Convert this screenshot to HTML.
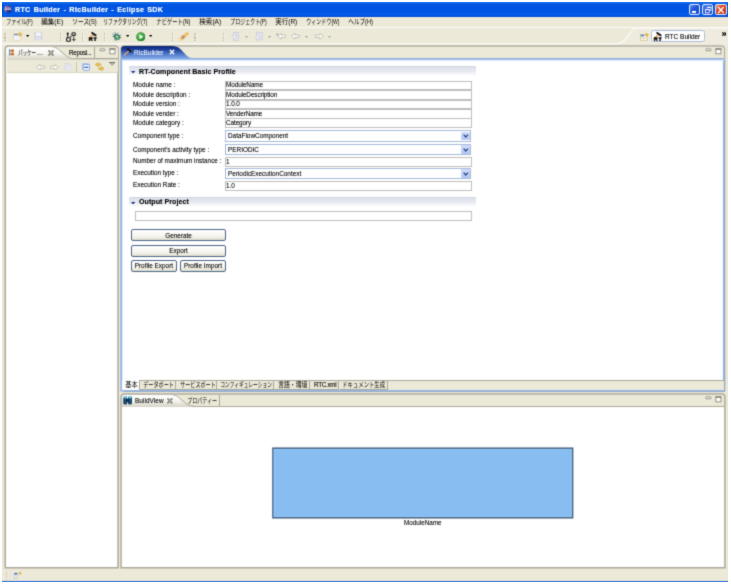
<!DOCTYPE html><html><head><meta charset="utf-8"><title>RTC Builder - RtcBuilder - Eclipse SDK</title><style>
*{box-sizing:border-box;margin:0;padding:0}
html,body{width:731px;height:586px;overflow:hidden;background:#fff}
body{position:relative;font-family:"Liberation Sans",sans-serif;font-size:6.4px;color:#000;line-height:1}
.a,.jp,.t{position:absolute}
.jp{overflow:visible}
.jp text{font-family:"Liberation Sans","Noto Sans CJK JP",sans-serif}
.t{white-space:nowrap;line-height:8px;height:8px;will-change:transform;text-shadow:0 0 .5px rgba(0,0,0,.32)}
.b{font-weight:bold}
#win{filter:url(#soft);left:2px;top:2px;width:726px;height:580px;background:#ece9d8}
#title{left:0;top:0;width:726px;height:14.6px;background:linear-gradient(#3a8af5 0%,#0a60e8 9%,#0054e0 22%,#0055e3 68%,#0560ee 86%,#0040c8 100%)}
.grip{width:1.4px;height:8.5px;background:repeating-linear-gradient(#bdb9a8 0,#bdb9a8 1.1px,transparent 1.1px,transparent 2.2px);box-shadow:.7px .7px 0 rgba(255,255,255,.6)}
.inp{background:#fff;border:1.15px solid #bdbdbd}
.cmb{height:11.2px;background:#fff;border:1px solid #a5b9d8}
.cmb i{position:absolute;right:0.3px;top:0.3px;bottom:0.3px;width:8.6px;background:linear-gradient(#d0dcfa,#b4c8f6);border-radius:1px}
.btn{height:12px;border:1px solid #4a6389;border-radius:2px;background:linear-gradient(#fff 0%,#f6f5ee 60%,#e2dfd0 100%);text-align:center}
.sec{height:10px;border-radius:2px 2px 0 0;background:linear-gradient(#dadee8 0%,#e6e9f0 50%,#fff 100%);box-shadow:inset 0 .8px 0 #cfd4df}
.tab{top:0;height:9.8px;background:#ece9d8;border:1px solid #aca899;border-left:none}
</style></head><body>
<svg width="0" height="0" style="position:absolute"><filter id="soft" x="0" y="0" width="1" height="1" color-interpolation-filters="sRGB"><feConvolveMatrix order="3" kernelMatrix="1 4 1 4 20 4 1 4 1" divisor="40" edgeMode="duplicate" preserveAlpha="true"/></filter></svg>
<div id="win" class="a">
<div id="title" class="a"></div>
<svg class="a" style="left:1.5px;top:2.9px" width="8" height="8" viewBox="0 0 8 8"><defs><radialGradient id="eg" cx=".5" cy=".3" r=".8"><stop offset="0" stop-color="#6a62b0"/><stop offset=".6" stop-color="#34307e"/><stop offset="1" stop-color="#1f1b5a"/></radialGradient></defs><circle cx="4" cy="4" r="3.7" fill="url(#eg)"/><path d="M3.2 .4A3.7 3.7 0 0 0 3.2 7.6A5 5 0 0 1 3.2 .4" fill="#d8b4c0" opacity=".85"/><rect x="1.2" y="2.7" width="6" height=".75" fill="#e4def2" opacity=".95"/><rect x="1" y="4.1" width="6.4" height=".75" fill="#e4def2" opacity=".9"/></svg>
<div class="t b" style="left:12.7px;top:3.9px;font-size:7.2px;color:#fff;letter-spacing:.26px;word-spacing:.9px;text-shadow:0 0 .5px rgba(255,255,255,.6)">RTC Builder - RtcBuilder - Eclipse SDK</div>
<div class="a" style="left:687px;top:1.5px;width:11.4px;height:11.2px;border-radius:2px;border:.8px solid #e9effb;background:linear-gradient(135deg,#5b90f2,#2259da 40%,#1746c2)"><div class="a" style="left:2.2px;top:6.3px;width:4.3px;height:1.9px;background:#fff"></div></div>
<div class="a" style="left:700.1px;top:1.5px;width:11.4px;height:11.2px;border-radius:2px;border:.8px solid #e9effb;background:linear-gradient(135deg,#5b90f2,#2259da 40%,#1746c2)"><svg class="a" style="left:0;top:0" width="10" height="10" viewBox="0 0 10 10"><g fill="none" stroke="#fff" stroke-width=".8"><path d="M4.2 3.4V2.2H8v3.3H6.6" /><path d="M3.9 2.4H8.3" stroke-width="1.1"/><rect x="2.3" y="4.4" width="3.9" height="3.4"/><path d="M2 4.6H6.5" stroke-width="1.1"/></g></svg></div>
<div class="a" style="left:713.2px;top:1.5px;width:11.4px;height:11.2px;border-radius:2px;border:.8px solid #e9effb;background:linear-gradient(135deg,#ee9276,#d8441e 40%,#bc310f)"><svg class="a" style="left:0;top:0" width="10" height="10" viewBox="0 0 10 10"><path d="M2.1 2L7.7 8M7.7 2L2.1 8" stroke="#fff" stroke-width="1.35"/></svg></div>
<svg class="jp " role="img" aria-label="ファイル(F)" style="left:4.30px;top:15.85px" width="27.10" height="7.81" viewBox="0 0 27.10 7.81"><text x="0.3" y="6.25" font-size="7.1" fill="#000" textLength="26.5" lengthAdjust="spacingAndGlyphs">ファイル(F)</text></svg>
<svg class="jp " role="img" aria-label="編集(E)" style="left:39.40px;top:15.85px" width="22.40" height="7.81" viewBox="0 0 22.40 7.81"><text x="0.3" y="6.25" font-size="7.1" fill="#000" textLength="21.8" lengthAdjust="spacingAndGlyphs">編集(E)</text></svg>
<svg class="jp " role="img" aria-label="ソース(S)" style="left:69.80px;top:15.85px" width="25.00" height="7.81" viewBox="0 0 25.00 7.81"><text x="0.3" y="6.25" font-size="7.1" fill="#000" textLength="24.4" lengthAdjust="spacingAndGlyphs">ソース(S)</text></svg>
<svg class="jp " role="img" aria-label="リファクタリング(T)" style="left:101.30px;top:15.85px" width="44.80" height="7.81" viewBox="0 0 44.80 7.81"><text x="0.3" y="6.25" font-size="7.1" fill="#000" textLength="44.2" lengthAdjust="spacingAndGlyphs">リファクタリング(T)</text></svg>
<svg class="jp " role="img" aria-label="ナビゲート(N)" style="left:154.40px;top:15.85px" width="34.60" height="7.81" viewBox="0 0 34.60 7.81"><text x="0.3" y="6.25" font-size="7.1" fill="#000" textLength="34" lengthAdjust="spacingAndGlyphs">ナビゲート(N)</text></svg>
<svg class="jp " role="img" aria-label="検索(A)" style="left:197.20px;top:15.85px" width="22.50" height="7.81" viewBox="0 0 22.50 7.81"><text x="0.3" y="6.25" font-size="7.1" fill="#000" textLength="21.9" lengthAdjust="spacingAndGlyphs">検索(A)</text></svg>
<svg class="jp " role="img" aria-label="プロジェクト(P)" style="left:228.00px;top:15.85px" width="37.10" height="7.81" viewBox="0 0 37.10 7.81"><text x="0.3" y="6.25" font-size="7.1" fill="#000" textLength="36.5" lengthAdjust="spacingAndGlyphs">プロジェクト(P)</text></svg>
<svg class="jp " role="img" aria-label="実行(R)" style="left:273.10px;top:15.85px" width="22.60" height="7.81" viewBox="0 0 22.60 7.81"><text x="0.3" y="6.25" font-size="7.1" fill="#000" textLength="22" lengthAdjust="spacingAndGlyphs">実行(R)</text></svg>
<svg class="jp " role="img" aria-label="ウィンドウ(W)" style="left:303.90px;top:15.85px" width="33.80" height="7.81" viewBox="0 0 33.80 7.81"><text x="0.3" y="6.25" font-size="7.1" fill="#000" textLength="33.2" lengthAdjust="spacingAndGlyphs">ウィンドウ(W)</text></svg>
<svg class="jp " role="img" aria-label="ヘルプ(H)" style="left:345.90px;top:15.85px" width="25.10" height="7.81" viewBox="0 0 25.10 7.81"><text x="0.3" y="6.25" font-size="7.1" fill="#000" textLength="24.5" lengthAdjust="spacingAndGlyphs">ヘルプ(H)</text></svg>
<div class="a" style="left:0;top:25px;width:726px;height:1.1px;background:#fbfaf5"></div>
<div class="a grip" style="left:2.2px;top:30.6px"></div>
<div class="a grip" style="left:57.6px;top:30.6px"></div>
<div class="a grip" style="left:79.8px;top:30.6px"></div>
<div class="a grip" style="left:102px;top:30.6px"></div>
<div class="a grip" style="left:170px;top:30.6px"></div>
<div class="a grip" style="left:192.4px;top:30.6px"></div>
<div class="a grip" style="left:220.8px;top:30.6px"></div>
<svg class="a" style="left:10.80px;top:30.40px" width="9.4" height="8.8" viewBox="0 0 9.4 8.8"><rect x=".5" y="1.5" width="7.4" height="6.7" rx=".7" fill="#fff" stroke="#e6d19a" stroke-width=".8"/><rect x="1" y="2" width="4.2" height="1.3" fill="#4f8ce0"/><rect x="1.3" y="3.9" width="5.6" height="3.5" fill="#eef4fd"/><path d="M7 .1l.8 1.3 1.4.3-1 1.1.2 1.5-1.4-.6-1.3.6.1-1.5-1-1.1 1.5-.3z" fill="#e6b948" stroke="#cfa038" stroke-width=".3"/></svg>
<svg class="a" style="left:24.10px;top:33.30px" width="3.4" height="1.9" viewBox="0 0 3.4 1.9"><path d="M0 0H3.4L1.7 1.9Z" fill="#000"/></svg>
<svg class="a" style="left:32.10px;top:30.40px" width="8.8" height="8.6" viewBox="0 0 8.8 8.6"><rect x=".3" y=".3" width="8.2" height="8" rx=".6" fill="#d4d5df"/><rect x="2" y=".6" width="4.8" height="3.4" fill="#f4f4f8"/><rect x="2.2" y="5.4" width="4.4" height="2.9" fill="#e9e9f0"/><rect x="3.9" y="5" width="1" height="3.3" fill="#d0d1db"/></svg>
<svg class="a" style="left:63.60px;top:29.60px" width="10.6" height="10" viewBox="0 0 10.6 10"><g fill="none" stroke="#0a0a0a" stroke-width="1.15"><path d="M1.8 2v3.6" stroke-width="1"/><rect x=".7" y="5.8" width="3.6" height="3.5" rx=".9" fill="#fff"/><rect x="5.9" y=".7" width="3.5" height="2.7" rx="1.2" fill="#fff"/><path d="M7.8 3.6v1.6" stroke-width=".8" stroke-dasharray=".7 .4"/></g><circle cx="1.7" cy="1.5" r="1.05" fill="#0a0a0a"/><circle cx="4.9" cy="4.5" r=".7" fill="#0a0a0a"/><circle cx="7.8" cy="6" r=".7" fill="#0a0a0a"/><path d="M5.9 6.9H9.8L7.85 9.6z" fill="#4a4a4a"/></svg>
<svg class="a" style="left:86.00px;top:30.00px" width="9.4" height="9.4" viewBox="0 0 9.4 9.4"><path d="M5 3.1L.9 6.7" stroke="#f2a25a" stroke-width="1.6" stroke-linecap="round"/><path d="M4.3 1L7.5 3.3" stroke="#0a0a0a" stroke-width="2" stroke-linecap="round"/><path d="M.9 5.2h2.5q1.4 0 1.4 1.1 0 .8-.8 1.1l1 1.5H3.6L2.9 7.6H2.2V8.9H.9zM5.5 5.2h3.3v1.2H7.8v2.5H6.4V6.4H5.5z" fill="#0a0a0a"/></svg>
<svg class="a" style="left:110.40px;top:30.00px" width="9.8" height="9.4" viewBox="0 0 9.8 9.4"><g stroke="#2a5f74" stroke-width=".8" stroke-linecap="round"><path d="M4.9 4.9L.9 2.2M4.9 4.9L3 .6M4.9 4.9L6 1.1M4.9 4.9L8.4 3.2M4.9 4.9L8.9 5.5M4.9 4.9L.9 4.4M4.9 4.9L2.1 7.5M4.9 4.9L3.9 8.8M4.9 4.9L7.8 7.4"/></g><ellipse cx="5" cy="5" rx="2.9" ry="2.5" fill="#1f6068" transform="rotate(25 5 5)"/><ellipse cx="5.1" cy="5" rx="2" ry="1.6" fill="#6fc45a" transform="rotate(25 5 5)"/><ellipse cx="4.6" cy="4.6" rx=".9" ry=".7" fill="#c8efb0" transform="rotate(25 5 5)"/></svg>
<svg class="a" style="left:123.90px;top:32.90px" width="3.4" height="1.9" viewBox="0 0 3.4 1.9"><path d="M0 0H3.4L1.7 1.9Z" fill="#000"/></svg>
<svg class="a" style="left:133.60px;top:29.60px" width="9.6" height="9.6" viewBox="0 0 9.6 9.6"><defs><radialGradient id="rg" cx=".4" cy=".35" r=".75"><stop offset="0" stop-color="#6fc86a"/><stop offset=".7" stop-color="#2f962f"/><stop offset="1" stop-color="#1f7a24"/></radialGradient></defs><circle cx="4.8" cy="4.8" r="4.4" fill="url(#rg)" stroke="#2a8430" stroke-width=".5"/><path d="M3.5 2.4L7.3 4.8 3.5 7.2z" fill="#fff"/></svg>
<svg class="a" style="left:147.00px;top:32.90px" width="3.4" height="1.9" viewBox="0 0 3.4 1.9"><path d="M0 0H3.4L1.7 1.9Z" fill="#000"/></svg>
<svg class="a" style="left:175.60px;top:29.60px" width="11" height="9.6" viewBox="0 0 11 9.6"><defs><radialGradient id="fl"><stop offset="0" stop-color="#fff"/><stop offset="1" stop-color="#fff" stop-opacity="0"/></radialGradient></defs><path d="M2.2 7.6L9 1.9" stroke="#f0aa3a" stroke-width="3.1" stroke-linecap="round"/><path d="M4.4 5.7L5.9 4.5" stroke="#9a96b4" stroke-width="3.1"/><path d="M7.3 3.2L8.8 2" stroke="#f6d890" stroke-width="2.2"/><circle cx="2" cy="7.8" r="2" fill="url(#fl)"/></svg>
<svg class="a" style="left:229.00px;top:30.00px" width="8.2" height="8.9" viewBox="0 0 8.2 8.9"><rect x="2.4" y=".5" width="5.4" height="8" fill="#e2e2ec" stroke="#c6c7d6" stroke-width=".6"/><path d="M2.4 .6v3.5H.8l2.3 2.8 2.3-2.8H3.9V.6z" fill="#fafafc" stroke="#c0c0cc" stroke-width=".55"/></svg>
<svg class="a" style="left:243.10px;top:33.60px" width="3" height="2" viewBox="0 0 3 2"><path d="M0 0H3L1.5 2Z" fill="#aaa799"/></svg>
<svg class="a" style="left:252.40px;top:30.00px" width="8.6" height="9.2" viewBox="0 0 8.6 9.2"><rect x="2.6" y=".5" width="5.6" height="7.4" fill="#e2e2ec" stroke="#c6c7d6" stroke-width=".6"/><path d="M2.6 8.9V5.7H1l2.4-2.8 2.4 2.8H4.2V8.9z" fill="#fafafc" stroke="#c0c0cc" stroke-width=".55"/></svg>
<svg class="a" style="left:266.00px;top:33.60px" width="3" height="2" viewBox="0 0 3 2"><path d="M0 0H3L1.5 2Z" fill="#aaa799"/></svg>
<svg class="a" style="left:273.60px;top:31.00px" width="10" height="6.6" viewBox="0 0 10 6.6"><g transform="translate(1.2,0)"><path d="M.5 3.3L4 .4v1.7h4.4v2.4H4v1.7z" fill="#fdfdfb" stroke="#b9b6a8" stroke-width=".8"/></g><circle cx="1.3" cy="1.4" r=".9" fill="#8a98b8"/></svg>
<svg class="a" style="left:289.40px;top:31.00px" width="9" height="6.6" viewBox="0 0 9 6.6"><path d="M.5 3.3L4 .4v1.7h4.4v2.4H4v1.7z" fill="#fdfdfb" stroke="#b9b6a8" stroke-width=".8"/></svg>
<svg class="a" style="left:302.90px;top:33.60px" width="3" height="2" viewBox="0 0 3 2"><path d="M0 0H3L1.5 2Z" fill="#aaa799"/></svg>
<svg class="a" style="left:312.80px;top:31.00px" width="9" height="6.6" viewBox="0 0 9 6.6"><g transform="translate(8.9,0) scale(-1,1)"><path d="M.5 3.3L4 .4v1.7h4.4v2.4H4v1.7z" fill="#fdfdfb" stroke="#b9b6a8" stroke-width=".8"/></g></svg>
<svg class="a" style="left:326.30px;top:33.60px" width="3" height="2" viewBox="0 0 3 2"><path d="M0 0H3L1.5 2Z" fill="#aaa799"/></svg>
<svg class="a" style="left:0.00px;top:24.00px" width="726" height="19" viewBox="0 0 726 19"><path d="M612 18.4C621.5 18.4 623.5 14 626.5 9.5C629.5 5 630.5 2.2 637 2.2H726V18.4z" fill="#efecdf"/><path d="M0 17.9H612C621.5 17.9 623.5 13.5 626.5 9C629.5 4.5 630.5 1.9 637 1.9H726" fill="none" stroke="#fcfbf7" stroke-width="1.1"/></svg>
<svg class="a" style="left:638.40px;top:30.80px" width="8.6" height="8.4" viewBox="0 0 8.6 8.4"><rect x=".5" y="1.4" width="6.6" height="6.4" fill="#fffef6" stroke="#c9b778" stroke-width=".7"/><rect x=".9" y="1.8" width="3.4" height="1.6" fill="#3f7fdc"/><path d="M.9 5.2H6.8M3.6 3.4V7.4" stroke="#cfc08a" stroke-width=".6"/><path d="M6.8 0l.6 1.1 1.2.2-.9.9.2 1.2-1.1-.5-1.1.5.2-1.2-.9-.9 1.2-.2z" fill="#e8b838" stroke="#c8962a" stroke-width=".3"/></svg>
<div class="a" style="left:648.8px;top:28.4px;width:53.8px;height:12px;background:#fff;border:1px solid #a9bcd6;border-radius:2.5px"></div>
<svg class="a" style="left:651.00px;top:30.20px" width="9.4" height="9.4" viewBox="0 0 9.4 9.4"><path d="M5 3.1L.9 6.7" stroke="#f2a25a" stroke-width="1.6" stroke-linecap="round"/><path d="M4.3 1L7.5 3.3" stroke="#0a0a0a" stroke-width="2" stroke-linecap="round"/><path d="M.9 5.2h2.5q1.4 0 1.4 1.1 0 .8-.8 1.1l1 1.5H3.6L2.9 7.6H2.2V8.9H.9zM5.5 5.2h3.3v1.2H7.8v2.5H6.4V6.4H5.5z" fill="#0a0a0a"/></svg>
<div class="t" style="left:662.7px;top:30.7px;font-size:6.5px">RTC Builder</div>
<svg class="a" style="left:719.70px;top:30.00px" width="4.8" height="4" viewBox="0 0 4.8 4"><path d="M.3 .3L1.9 2 .3 3.7M2.5 .3L4.1 2 2.5 3.7" fill="none" stroke="#000" stroke-width="1.15"/></svg>
<svg class="a" style="left:0;top:0;pointer-events:none" width="726" height="580" viewBox="2 2 726 580"><path d="M5.25 567.75V49.3Q5.25 45.9 8.65 45.9H114.64999999999999Q118.05 45.9 118.05 49.3V567.75z" fill="#fff" stroke="#aca899" stroke-width="1.5"/></svg>
<div class="a" style="left:4.50px;top:44.70px;width:111.00px;height:12.40px;background:#ece9d8;border-radius:2.5px 2.5px 0 0"></div>
<div class="a" style="left:4.50px;top:57.10px;width:111.00px;height:14.00px;background:#ece9d8;border-bottom:1px solid #d9d6c6"></div>
<svg class="a" style="left:4.50px;top:44.70px" width="70" height="13.2" viewBox="0 0 70 13.2"><defs><linearGradient id="vt" x1="0" y1="0" x2="0" y2="1"><stop offset="0" stop-color="#fff"/><stop offset=".45" stop-color="#f7f6f1"/><stop offset="1" stop-color="#d5d2c5"/></linearGradient></defs><path d="M0 13.2V2.5Q0 0 2.5 0H43C49 0 51 2.6 53.2 4.3L59.8 9.7C62 11.4 64 12.1 68 12.1H70V13.2H0z" fill="url(#vt)"/><path d="M43 -.5C49 -.5 51 2.1 53.2 3.8L59.8 9.2C62 10.9 64 11.8 68 11.8H70" fill="none" stroke="#aca899" stroke-width="1"/></svg>
<div class="a" style="left:73.00px;top:56.00px;width:43.00px;height:1.00px;background:#aca899"></div>
<div class="a" style="left:70.00px;top:57.00px;width:46.00px;height:1.00px;background:#d6d3c4"></div>
<div class="a" style="left:92.00px;top:44.50px;width:1.00px;height:12.40px;background:#aca899"></div>
<svg class="a" style="left:7.00px;top:46.80px" width="5.4" height="6.8" viewBox="0 0 5.4 6.8"><path d="M.5 0V6.8" stroke="#5a88c8" stroke-width=".9"/><rect x="1.6" y=".4" width="3.4" height="2.5" rx=".5" fill="#c8701c"/><rect x="1.6" y="3.7" width="3.4" height="2.5" rx=".5" fill="#c8701c"/><path d="M.5 1.6H2M.5 5H2" stroke="#5a88c8" stroke-width=".6"/></svg>
<svg class="jp " role="img" aria-label="パッケー" style="left:16.00px;top:46.95px" width="18.40" height="7.81" viewBox="0 0 18.40 7.81"><text x="0.2" y="6.25" font-size="7.1" fill="#000" textLength="17.9" lengthAdjust="spacingAndGlyphs">パッケー</text></svg>
<div class="t " style="left:34.60px;top:47.09px;font-size:6.4px;letter-spacing:.2px">...</div>
<svg class="a" style="left:46.40px;top:47.60px" width="6" height="6" viewBox="0 0 5.6 5.6"><path d="M.8 .3L2.8 2.1 4.8 .3 5.3 .8 3.5 2.8 5.3 4.8 4.8 5.3 2.8 3.5 .8 5.3 .3 4.8 2.1 2.8 .3 .8z" fill="#fff" stroke="#605e54" stroke-width=".9"/></svg>
<div class="t " style="left:66.90px;top:47.12px;font-size:6.3px;letter-spacing:-.28px">Reposi...</div>
<svg class="a" style="left:96.50px;top:45.90px" width="7" height="4" viewBox="0 0 7 4"><rect x=".85" y=".85" width="5.1" height="1.9" rx=".5" fill="#fff" stroke="#807d70" stroke-width=".8"/></svg><svg class="a" style="left:106.50px;top:45.90px" width="7" height="7" viewBox="0 0 7 7"><rect x=".85" y=".85" width="5.1" height="5" fill="#fff" stroke="#807d70" stroke-width=".8"/><path d="M.5 1.1H6.3" stroke="#807d70" stroke-width="1.3"/></svg>
<svg class="a" style="left:34.20px;top:62.00px" width="8.8" height="6" viewBox="0 0 8.8 6"><path d="M.5 3.3L4 .4v1.7h4.4v2.4H4v1.7z" fill="#fdfdfb" stroke="#b9b6a8" stroke-width=".8"/></svg>
<svg class="a" style="left:47.80px;top:62.00px" width="8.8" height="6" viewBox="0 0 8.8 6"><g transform="translate(8.8,0) scale(-1,1)"><path d="M.5 3.3L4 .4v1.7h4.4v2.4H4v1.7z" fill="#fdfdfb" stroke="#b9b6a8" stroke-width=".8"/></g></svg>
<svg class="a" style="left:61.60px;top:60.60px" width="8.4" height="8.8" viewBox="0 0 8.4 8.8"><rect x=".4" y=".4" width="5" height="5.6" fill="#e4e6ee" stroke="#d2d2da" stroke-width=".5"/><rect x="2.2" y="2" width="5" height="5.6" fill="#eceef4" stroke="#d2d2da" stroke-width=".5"/><path d="M3.4 3.6H6M3.4 5H6" stroke="#d0d0da" stroke-width=".6"/></svg>
<div class="a" style="left:74.00px;top:59.60px;width:1.00px;height:10.20px;background:#c9c6b6"></div>
<svg class="a" style="left:80.20px;top:61.20px" width="8" height="7.8" viewBox="0 0 8 7.8"><rect x=".4" y=".4" width="6" height="5.8" rx=".6" fill="#dfe9f8" stroke="#9ab6e4" stroke-width=".7"/><rect x="1.3" y="1.4" width="6.2" height="5.9" rx=".7" fill="#f6f9fe" stroke="#6f9ade" stroke-width=".85"/><rect x="2.5" y="3.7" width="3.8" height="1.3" fill="#2f62b8"/></svg>
<svg class="a" style="left:93.00px;top:59.80px" width="9.4" height="9.2" viewBox="0 0 9.4 9.2"><g fill="#f0c24a" stroke="#c89628" stroke-width=".5"><path d="M.4 2.6L3 .4V1.8H5.6V3.4H3V4.8z"/><path d="M9 6.6L6.4 4.4V5.8H3.8V7.4H6.4V8.8z"/></g></svg>
<svg class="a" style="left:106.80px;top:60.20px" width="6.4" height="3.8" viewBox="0 0 6.4 3.8"><path d="M.4 .4H6L3.2 3.3z" fill="#c9c6b8" stroke="#77756a" stroke-width=".7"/><path d="M.2 .5H6.2" stroke="#6c6a5f" stroke-width=".9"/></svg>
<svg class="a" style="left:0;top:0;pointer-events:none" width="726" height="580" viewBox="2 2 726 580"><path d="M121.3 390.5V49.4Q121.3 46 124.7 46H720.9Q724.3 46 724.3 49.4V390.5z" fill="#fff" stroke="#b0ac9e" stroke-width="1.6"/><path d="M121.3 58V390.5H723.8V58" fill="none" stroke="#94b8ec" stroke-width="1.8"/><path d="M724.8 60V391.5H124" fill="none" stroke="#8a9cbc" stroke-width=".7"/></svg>
<div class="a" style="left:119.90px;top:44.50px;width:602.60px;height:11.60px;background:#ece9d8;border-radius:2.5px 2.5px 0 0"></div>
<div class="a" style="left:119.90px;top:55.90px;width:602.60px;height:3.00px;background:linear-gradient(#a9a592 0,#8fb2ea 22%,#9dbdf0 45%,#fff 100%)"></div>
<svg class="a" style="left:118.50px;top:43.70px" width="74" height="13.6" viewBox="0 0 74 13.6"><defs><linearGradient id="et" x1="0" y1="0" x2="0" y2="1"><stop offset="0" stop-color="#0a2478"/><stop offset=".25" stop-color="#1f3f98"/><stop offset=".6" stop-color="#4f79c8"/><stop offset="1" stop-color="#8db4f0"/></linearGradient></defs><path d="M0 13.6V3.5Q0 0 3.5 0H51C58 0 60 3.8 62.5 6.3S67 12.3 73 12.5H74V13.6z" fill="url(#et)"/></svg>
<svg class="a" style="left:120.60px;top:46.40px" width="9.2" height="8" viewBox="0 0 9.2 8"><path d="M5.6 3.1L1.3 7.1" stroke="#f0a860" stroke-width="1.3" stroke-linecap="round"/><path d="M4.7 .9L7.9 3.8" stroke="#111" stroke-width="1.6" stroke-linecap="round"/></svg>
<div class="t " style="left:132.30px;top:47.09px;font-size:6.4px;color:#e6effd;text-shadow:0 0 .5px rgba(255,255,255,.45)">RtcBuilder</div>
<svg class="a" style="left:167.20px;top:47.40px" width="6" height="6" viewBox="0 0 6 6"><path d="M.8 .8L5.2 5.2M5.2 .8L.8 5.2" stroke="#fff" stroke-width="1.3"/></svg>
<svg class="a" style="left:702.90px;top:46.10px" width="7" height="4" viewBox="0 0 7 4"><rect x=".85" y=".85" width="5.1" height="1.9" rx=".5" fill="#fff" stroke="#807d70" stroke-width=".8"/></svg><svg class="a" style="left:712.70px;top:46.10px" width="7" height="7" viewBox="0 0 7 7"><rect x=".85" y=".85" width="5.1" height="5" fill="#fff" stroke="#807d70" stroke-width=".8"/><path d="M.5 1.1H6.3" stroke="#807d70" stroke-width="1.3"/></svg>
<div class="a sec" style="left:126.90px;top:64.30px;width:346.80px"></div><svg class="a" style="left:129.10px;top:69.40px" width="4.2" height="2.6" viewBox="0 0 4.2 2.6"><path d="M0 0H4.2L2.1 2.6z" fill="#1a2f8a"/></svg><div class="t b" style="left:137.20px;top:66.16px;font-size:7.1px;letter-spacing:.04px">RT-Component Basic Profile</div>
<div class="t " style="left:130.80px;top:79.39px;font-size:6.4px;">Module name :</div>
<div class="t " style="left:130.80px;top:88.79px;font-size:6.4px;">Module description :</div>
<div class="t " style="left:130.80px;top:98.19px;font-size:6.4px;">Module version :</div>
<div class="t " style="left:130.80px;top:107.59px;font-size:6.4px;">Module vender :</div>
<div class="t " style="left:130.80px;top:116.99px;font-size:6.4px;">Module category :</div>
<div class="t " style="left:130.80px;top:130.19px;font-size:6.4px;">Component type :</div>
<div class="t " style="left:130.80px;top:143.79px;font-size:6.4px;">Component's activity type :</div>
<div class="t " style="left:130.80px;top:155.39px;font-size:6.4px;">Number of maximum instance :</div>
<div class="t " style="left:130.80px;top:167.39px;font-size:6.4px;">Execution type :</div>
<div class="t " style="left:130.80px;top:179.29px;font-size:6.4px;">Execution Rate :</div>
<div class="a inp" style="left:222.60px;top:78.80px;width:247.20px;height:9.5px"></div><div class="t " style="left:223.50px;top:79.39px;font-size:6.4px;letter-spacing:-.1px">ModuleName</div>
<div class="a inp" style="left:222.60px;top:88.20px;width:247.20px;height:9.5px"></div><div class="t " style="left:223.50px;top:88.79px;font-size:6.4px;letter-spacing:-.1px">ModuleDescription</div>
<div class="a inp" style="left:222.60px;top:97.60px;width:247.20px;height:9.5px"></div><div class="t " style="left:223.50px;top:98.19px;font-size:6.4px;letter-spacing:-.1px">1.0.0</div>
<div class="a inp" style="left:222.60px;top:107.00px;width:247.20px;height:9.5px"></div><div class="t " style="left:223.50px;top:107.59px;font-size:6.4px;letter-spacing:-.1px">VenderName</div>
<div class="a inp" style="left:222.60px;top:116.40px;width:247.20px;height:9.5px"></div><div class="t " style="left:223.50px;top:116.99px;font-size:6.4px;letter-spacing:-.1px">Category</div>
<div class="a cmb" style="left:222.60px;top:128.40px;width:246.40px"><i></i></div><svg class="a" style="left:461.40px;top:132.10px" width="5.6" height="4" viewBox="0 0 5.6 4"><path d="M.6 .6L2.8 3 5 .6" fill="none" stroke="#28407e" stroke-width="1.25"/></svg><div class="t " style="left:226.20px;top:129.89px;font-size:6.4px;">DataFlowComponent</div>
<div class="a cmb" style="left:222.60px;top:142.20px;width:246.40px"><i></i></div><svg class="a" style="left:461.40px;top:145.90px" width="5.6" height="4" viewBox="0 0 5.6 4"><path d="M.6 .6L2.8 3 5 .6" fill="none" stroke="#28407e" stroke-width="1.25"/></svg><div class="t " style="left:226.20px;top:143.69px;font-size:6.4px;">PERIODIC</div>
<div class="a inp" style="left:222.60px;top:155.30px;width:247.20px;height:9.5px"></div><div class="t " style="left:223.50px;top:155.89px;font-size:6.4px;letter-spacing:-.1px">1</div>
<div class="a cmb" style="left:222.60px;top:166.20px;width:246.40px"><i></i></div><svg class="a" style="left:461.40px;top:169.90px" width="5.6" height="4" viewBox="0 0 5.6 4"><path d="M.6 .6L2.8 3 5 .6" fill="none" stroke="#28407e" stroke-width="1.25"/></svg><div class="t " style="left:226.20px;top:167.69px;font-size:6.4px;">PeriodicExecutionContext</div>
<div class="a inp" style="left:222.60px;top:179.40px;width:247.20px;height:9.5px"></div><div class="t " style="left:223.50px;top:179.99px;font-size:6.4px;letter-spacing:-.1px">1.0</div>
<div class="a sec" style="left:126.90px;top:194.70px;width:346.80px"></div><svg class="a" style="left:129.10px;top:199.80px" width="4.2" height="2.6" viewBox="0 0 4.2 2.6"><path d="M0 0H4.2L2.1 2.6z" fill="#1a2f8a"/></svg><div class="t b" style="left:137.20px;top:195.76px;font-size:7.1px;letter-spacing:.04px">Output Project</div>
<div class="a inp" style="left:133.20px;top:209.40px;width:336.60px;height:9.5px"></div>
<div class="a btn" style="left:129.00px;top:227.20px;width:95.20px"></div><div class="t" style="left:129.00px;top:229.50px;width:95.20px;text-align:center;font-size:6.4px">Generate</div>
<div class="a btn" style="left:129.00px;top:242.70px;width:95.20px"></div><div class="t" style="left:129.00px;top:245.00px;width:95.20px;text-align:center;font-size:6.4px">Export</div>
<div class="a btn" style="left:129.00px;top:258.00px;width:45.80px"></div><div class="t" style="left:129.00px;top:260.30px;width:45.80px;text-align:center;font-size:6.4px">Profile Export</div>
<div class="a btn" style="left:178.30px;top:258.00px;width:45.90px"></div><div class="t" style="left:178.30px;top:260.30px;width:45.90px;text-align:center;font-size:6.4px">Profile Import</div>
<div class="a" style="left:119.90px;top:378.20px;width:602.60px;height:10.30px;background:#ece9d8;border-top:1px solid #aca899"></div>
<div class="a" style="left:119.90px;top:378.20px;width:18.00px;height:9.80px;background:#fff"></div>
<div class="a tab" style="left:137.90px;top:378.20px;width:36.10px"></div>
<div class="a tab" style="left:174.00px;top:378.20px;width:41.20px"></div>
<div class="a tab" style="left:215.20px;top:378.20px;width:57.20px"></div>
<div class="a tab" style="left:272.40px;top:378.20px;width:36.00px"></div>
<div class="a tab" style="left:308.40px;top:378.20px;width:29.10px"></div>
<div class="a tab" style="left:337.50px;top:378.20px;width:48.00px"></div>
<div class="a" style="left:137.40px;top:378.20px;width:1.00px;height:9.80px;background:#aca899"></div>
<svg class="jp " role="img" aria-label="基本" style="left:122.80px;top:379.35px" width="13.10" height="7.81" viewBox="0 0 13.10 7.81"><text x="0.2" y="6.25" font-size="7.1" fill="#000" textLength="12.7" lengthAdjust="spacingAndGlyphs">基本</text></svg>
<svg class="jp " role="img" aria-label="データポート" style="left:140.80px;top:379.35px" width="31.20" height="7.81" viewBox="0 0 31.20 7.81"><text x="0.2" y="6.25" font-size="7.1" fill="#000" textLength="30.8" lengthAdjust="spacingAndGlyphs">データポート</text></svg>
<svg class="jp " role="img" aria-label="サービスポート" style="left:177.50px;top:379.35px" width="36.00" height="7.81" viewBox="0 0 36.00 7.81"><text x="0.2" y="6.25" font-size="7.1" fill="#000" textLength="35.6" lengthAdjust="spacingAndGlyphs">サービスポート</text></svg>
<svg class="jp " role="img" aria-label="コンフィギュレーション" style="left:218.40px;top:379.35px" width="52.20" height="7.81" viewBox="0 0 52.20 7.81"><text x="0.2" y="6.25" font-size="7.1" fill="#000" textLength="51.8" lengthAdjust="spacingAndGlyphs">コンフィギュレーション</text></svg>
<svg class="jp " role="img" aria-label="言語・環境" style="left:276.40px;top:379.35px" width="29.60" height="7.81" viewBox="0 0 29.60 7.81"><text x="0.2" y="6.25" font-size="7.1" fill="#000" textLength="29.2" lengthAdjust="spacingAndGlyphs">言語・環境</text></svg>
<svg class="jp " role="img" aria-label="ドキュメント生成" style="left:339.70px;top:379.35px" width="43.30" height="7.81" viewBox="0 0 43.30 7.81"><text x="0.2" y="6.25" font-size="7.1" fill="#000" textLength="42.9" lengthAdjust="spacingAndGlyphs">ドキュメント生成</text></svg>
<div class="t " style="left:311.60px;top:379.42px;font-size:6.3px;letter-spacing:-.3px">RTC.xml</div>
<svg class="a" style="left:0;top:0;pointer-events:none" width="726" height="580" viewBox="2 2 726 580"><path d="M121.05 567.75V397.4Q121.05 394 124.45 394H721.5Q724.9 394 724.9 397.4V567.75z" fill="#fff" stroke="#aca899" stroke-width="1.5"/></svg>
<div class="a" style="left:119.70px;top:392.80px;width:602.80px;height:12.30px;background:#ece9d8;border-radius:2.5px 2.5px 0 0;border-bottom:1px solid #aca899"></div>
<svg class="a" style="left:119.70px;top:392.80px" width="72" height="12" viewBox="0 0 72 12"><path d="M0 12V2.5Q0 0 2.5 0H48C54 0 56 2.4 58.2 4.2L64.4 9.2C66.6 10.8 68.6 11.4 72 11.4V12H0z" fill="url(#vt)"/><path d="M48 -.5C54 -.5 56 1.9 58.2 3.7L64.4 8.7C66.6 10.3 68.6 11.1 72 11.1" fill="none" stroke="#aca899" stroke-width="1"/></svg>
<div class="a" style="left:217.40px;top:392.80px;width:1.00px;height:11.60px;background:#aca899"></div>
<svg class="a" style="left:120.70px;top:394.00px" width="9.4" height="8.8" viewBox="0 0 9.4 8.8"><defs><linearGradient id="bn" x1="0" y1="0" x2="1" y2="0"><stop offset="0" stop-color="#0a2244"/><stop offset=".5" stop-color="#1b5a8c"/><stop offset="1" stop-color="#08203c"/></linearGradient></defs><rect x=".3" y=".4" width="3.9" height="8.1" rx="1.5" fill="url(#bn)"/><rect x="5" y=".4" width="3.9" height="8.1" rx="1.5" fill="url(#bn)"/><rect x="3.4" y="3" width="2.4" height="2.8" fill="#0c2a4c"/><rect x=".9" y=".5" width="2.7" height="2" rx=".8" fill="#5fdcf0"/><rect x="5.6" y=".5" width="2.7" height="2" rx=".8" fill="#5fdcf0"/></svg>
<div class="t " style="left:132.50px;top:394.59px;font-size:6.4px;letter-spacing:.08px">BuildView</div>
<svg class="a" style="left:165.40px;top:396.00px" width="5.8" height="5.8" viewBox="0 0 5.6 5.6"><path d="M.8 .3L2.8 2.1 4.8 .3 5.3 .8 3.5 2.8 5.3 4.8 4.8 5.3 2.8 3.5 .8 5.3 .3 4.8 2.1 2.8 .3 .8z" fill="#fff" stroke="#605e54" stroke-width=".9"/></svg>
<svg class="jp " role="img" aria-label="プロパティー" style="left:185.40px;top:394.75px" width="30.20" height="7.81" viewBox="0 0 30.20 7.81"><text x="0.2" y="6.25" font-size="7.1" fill="#000" textLength="29.8" lengthAdjust="spacingAndGlyphs">プロパティー</text></svg>
<svg class="a" style="left:702.70px;top:393.50px" width="7" height="4" viewBox="0 0 7 4"><rect x=".85" y=".85" width="5.1" height="1.9" rx=".5" fill="#fff" stroke="#807d70" stroke-width=".8"/></svg><svg class="a" style="left:712.50px;top:393.50px" width="7" height="7" viewBox="0 0 7 7"><rect x=".85" y=".85" width="5.1" height="5" fill="#fff" stroke="#807d70" stroke-width=".8"/><path d="M.5 1.1H6.3" stroke="#807d70" stroke-width="1.3"/></svg>
<svg class="a" style="left:268.00px;top:443.00px" width="306" height="76" viewBox="0 0 306 76"><rect x="2.9" y="3.2" width="299.7" height="69.6" fill="#87bdf0" stroke="#46607f" stroke-width="1.5"/><rect x="4" y="4.3" width="297.5" height="67.4" fill="none" stroke="#95cdfb" stroke-width=".7"/></svg>
<div class="t " style="left:402.20px;top:516.72px;font-size:6.3px;">ModuleName</div>
<div class="a grip" style="left:4px;top:570px;height:7.6px;box-shadow:none;opacity:.8"></div>
<svg class="a" style="left:12.00px;top:570.40px" width="8" height="7" viewBox="0 0 8 7"><rect x=".4" y="1" width="2.8" height="5.6" rx=".5" fill="#f4f6fc" stroke="#9a9aa8" stroke-width=".5"/><rect x=".5" y="1" width="2.6" height="1.6" fill="#3a6ad0"/><path d="M6 0l1.3 1.3L6 2.6 4.7 1.3z" fill="#e8b838" stroke="#b88a20" stroke-width=".4"/></svg>
<div class="a" style="left:0.00px;top:579.00px;width:726.00px;height:1.00px;background:#2f6fe0"></div>
</div>
</body></html>
